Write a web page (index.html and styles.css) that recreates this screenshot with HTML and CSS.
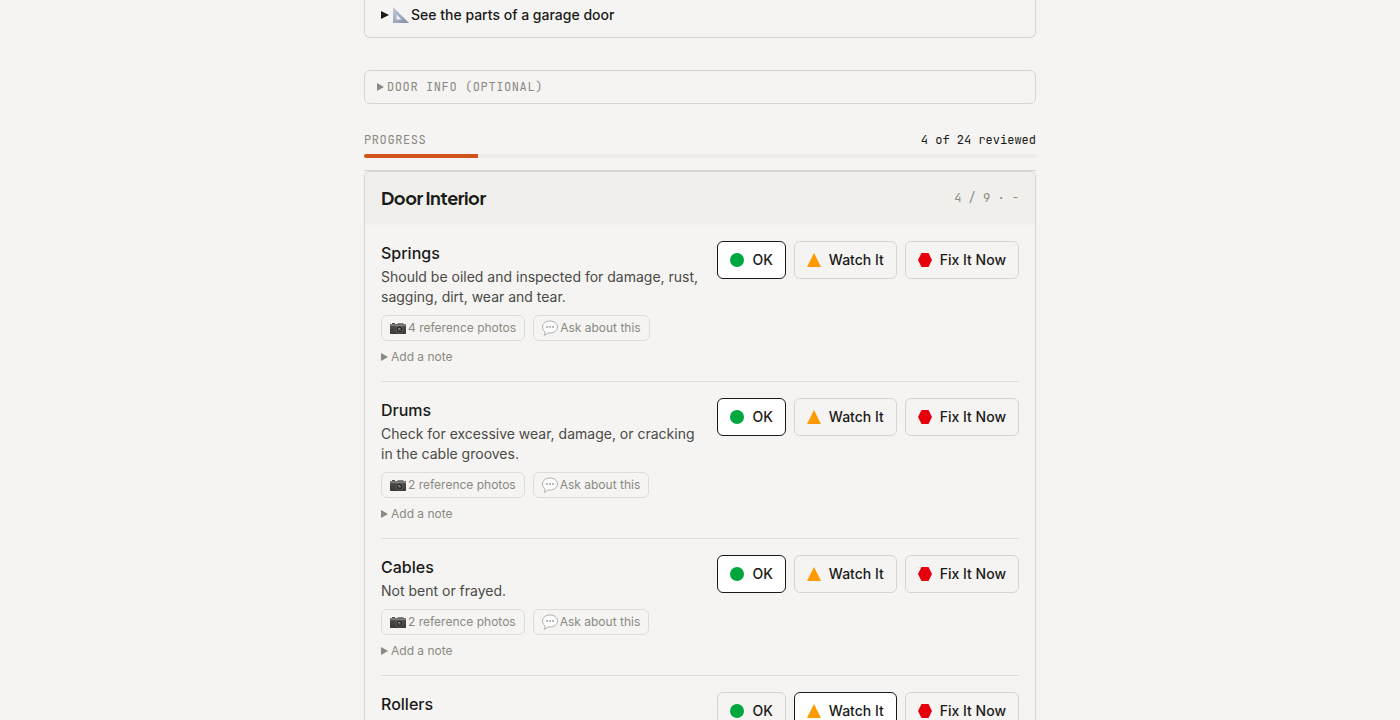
FILE: index.html
```html
<!DOCTYPE html>
<html lang="en">
<head>
  <meta charset="UTF-8">
  <title>Garage Door Inspection</title>
  <meta name="viewport" content="width=device-width, initial-scale=1.0">
  <link rel="stylesheet" href="styles.css">
</head>
<body>
  <!-- shared icons -->
  <svg class="sprite" aria-hidden="true">
    <defs>
      <linearGradient id="steel" x1="0" y1="0" x2="1" y2="1">
        <stop offset="0" stop-color="#c3cddc"/>
        <stop offset="1" stop-color="#7f8aa6"/>
      </linearGradient>
      <linearGradient id="body" x1="0" y1="0" x2="0" y2="1">
        <stop offset="0" stop-color="#8a8784"/>
        <stop offset="0.35" stop-color="#4a4846"/>
        <stop offset="1" stop-color="#3a3938"/>
      </linearGradient>
    </defs>
    <symbol id="ok" viewBox="0 0 14 14"><circle cx="7" cy="7" r="7" fill="#00a63e"/></symbol>
    <symbol id="watch" viewBox="0 0 14 14"><path d="M7 0L14 14H0z" fill="#fe9a00"/></symbol>
    <symbol id="fix" viewBox="0 0 14 14"><path d="M3.500 0h7L14 7l-3.500 7h-7L0 7z" fill="#e7000b"/></symbol>
    <symbol id="ruler" viewBox="0 0 16 16">
      <path fill="url(#steel)" fill-rule="evenodd" d="M0 0L16 16H0zM3.500 7.500V12.500H8.500z"/>
    </symbol>
    <symbol id="camera" viewBox="0 0 16 16">
      <path d="M2 3h3v1H2z" fill="#55524f"/>
      <path d="M1 4h6l1-1h5l1 1h1c.6 0 1 .4 1 1v8c0 .6-.4 1-1 1H1c-.6 0-1-.4-1-1V5c0-.6.4-1 1-1z" fill="url(#body)"/>
      <path d="M.5 5.500h15" stroke="#8b8783" stroke-width="0.8"/>
      <circle cx="9.500" cy="9.500" r="3.500" fill="#22211f" stroke="#8a8784" stroke-width="0.6"/>
      <circle cx="9.500" cy="9.500" r="2" fill="#4c5057"/>
      <circle cx="9" cy="8.800" r="0.8" fill="#a4abb5"/>
    </symbol>
    <symbol id="speech" viewBox="0 0 16 16">
      <path d="M8 1c4.200 0 7.500 2.600 7.500 6S12.200 13 8 13c-.8 0-1.500 0-2.200-.2C4.900 14.200 3.500 15 2 15.200c.8-.9 1-2 .8-3.400C1.400 10.600.5 9 .5 7 .5 3.600 3.800 1 8 1z" fill="#fbfbfb" stroke="#a6a6a6" stroke-width="0.9"/>
      <g fill="#666"><circle cx="5" cy="7" r="0.8"/><circle cx="8" cy="7" r="0.8"/><circle cx="11" cy="7" r="0.8"/></g>
    </symbol>
  </svg>

  <main class="page">
    <section class="parts">
      <details>
        <summary><svg class="emoji"><use href="#ruler"/></svg>See the parts of a garage door</summary>
      </details>
    </section>

    <details class="door-info">
      <summary>Door info (optional)</summary>
    </details>

    <div class="progress">
      <div class="progress-row">
        <span class="progress-label" id="progress-label">Progress</span>
        <span>4 of 24 reviewed</span>
      </div>
      <div class="track" role="progressbar" aria-labelledby="progress-label" aria-valuemin="0" aria-valuemax="24" aria-valuenow="4">
        <div class="fill" style="width: 17%"></div>
      </div>
    </div>

    <section class="group">
      <header class="group-header">
        <h2>Door Interior</h2>
        <span class="count">4 / 9 · -</span>
      </header>

      <article class="item">
        <div class="info">
          <h3>Springs</h3>
          <p>Should be oiled and inspected for damage, rust, sagging, dirt, wear and tear.</p>
          <div class="chips">
            <button class="chip"><svg class="emoji"><use href="#camera"/></svg>4 reference photos</button>
            <button class="chip"><svg class="emoji"><use href="#speech"/></svg>Ask about this</button>
          </div>
          <details class="note"><summary>Add a note</summary></details>
        </div>
        <div class="ratings">
          <button class="rating selected" aria-pressed="true"><svg><use href="#ok"/></svg>OK</button>
          <button class="rating" aria-pressed="false"><svg><use href="#watch"/></svg>Watch It</button>
          <button class="rating" aria-pressed="false"><svg><use href="#fix"/></svg>Fix It Now</button>
        </div>
      </article>

      <article class="item">
        <div class="info">
          <h3>Drums</h3>
          <p>Check for excessive wear, damage, or cracking in the cable grooves.</p>
          <div class="chips">
            <button class="chip"><svg class="emoji"><use href="#camera"/></svg>2 reference photos</button>
            <button class="chip"><svg class="emoji"><use href="#speech"/></svg>Ask about this</button>
          </div>
          <details class="note"><summary>Add a note</summary></details>
        </div>
        <div class="ratings">
          <button class="rating selected" aria-pressed="true"><svg><use href="#ok"/></svg>OK</button>
          <button class="rating" aria-pressed="false"><svg><use href="#watch"/></svg>Watch It</button>
          <button class="rating" aria-pressed="false"><svg><use href="#fix"/></svg>Fix It Now</button>
        </div>
      </article>

      <article class="item">
        <div class="info">
          <h3>Cables</h3>
          <p>Not bent or frayed.</p>
          <div class="chips">
            <button class="chip"><svg class="emoji"><use href="#camera"/></svg>2 reference photos</button>
            <button class="chip"><svg class="emoji"><use href="#speech"/></svg>Ask about this</button>
          </div>
          <details class="note"><summary>Add a note</summary></details>
        </div>
        <div class="ratings">
          <button class="rating selected" aria-pressed="true"><svg><use href="#ok"/></svg>OK</button>
          <button class="rating" aria-pressed="false"><svg><use href="#watch"/></svg>Watch It</button>
          <button class="rating" aria-pressed="false"><svg><use href="#fix"/></svg>Fix It Now</button>
        </div>
      </article>

      <article class="item">
        <div class="info">
          <h3>Rollers</h3>
        </div>
        <div class="ratings">
          <button class="rating" aria-pressed="false"><svg><use href="#ok"/></svg>OK</button>
          <button class="rating selected" aria-pressed="true"><svg><use href="#watch"/></svg>Watch It</button>
          <button class="rating" aria-pressed="false"><svg><use href="#fix"/></svg>Fix It Now</button>
        </div>
      </article>
    </section>
  </main>
</body>
</html>
```
FILE: styles.css
```css
* {
  box-sizing: border-box;
}

body {
  margin: 0;
  background: #f5f4f2;
  color: #1a1a18;
  font-family: Inter, "Liberation Sans", sans-serif;
  font-size: 14px;
  line-height: 20px;
}

h2,
h3,
p {
  margin: 0;
}

button {
  font: inherit;
  color: inherit;
  background: transparent;
  cursor: pointer;
}

summary {
  display: flex;
  align-items: center;
  cursor: pointer;
  list-style: none;
}

/* disclosure arrow */
summary::before {
  content: "";
  width: 7px;
  height: 8px;
  margin-right: 3px;
  background: currentColor;
  clip-path: polygon(0 0, 100% 50%, 0 100%);
}

details[open] > summary::before {
  transform: rotate(90deg);
}

.sprite {
  display: block;
  width: 0;
  height: 0;
}

.emoji {
  width: 16px;
  height: 16px;
  flex: none;
}

.page {
  max-width: 672px;
  margin: 0 auto;
}

.parts {
  padding: 5px 16px 12px;
  border: 1px solid #d6d5d1;
  border-top: none;
  border-radius: 0 0 6px 6px;
  font-weight: 500;
}

.parts summary::before {
  width: 8px;
  margin-right: 4px;
}

.parts .emoji {
  margin-right: 2px;
}

.door-info {
  margin-top: 32px;
  padding: 8px 12px;
  border: 1px solid #d6d5d1;
  border-radius: 6px;
  color: #8a8a82;
  font-family: "JetBrains Mono", "Liberation Mono", monospace;
  font-size: 12px;
  line-height: 16px;
  letter-spacing: 0.05em;
  text-transform: uppercase;
}

.progress {
  margin-top: 24px;
  padding: 4px 0 12px;
  border-bottom: 1px solid #d6d5d1;
  font-family: "JetBrains Mono", "Liberation Mono", monospace;
  font-size: 12px;
  line-height: 16px;
}

.progress-row {
  display: flex;
  justify-content: space-between;
  margin-bottom: 6px;
}

.progress-label {
  color: #8a8a82;
  letter-spacing: 0.05em;
  text-transform: uppercase;
}

.track {
  height: 4px;
  background: #edece8;
  border-radius: 2px;
  overflow: hidden;
}

.fill {
  height: 100%;
  background: #d0541b;
}

.group {
  border: 1px solid #d6d5d1;
  border-radius: 6px;
  overflow: hidden;
}

.group-header {
  display: flex;
  justify-content: space-between;
  align-items: center;
  padding: 12px 16px;
  background: #f0efeb;
  border-bottom: 1px solid #f2f1ee;
}

.group-header h2 {
  font-family: "Plus Jakarta Sans", Inter, sans-serif;
  font-size: 18px;
  font-weight: 700;
  line-height: 28px;
  letter-spacing: -0.025em;
}

.count {
  color: #8a8a82;
  font-family: "JetBrains Mono", "Liberation Mono", monospace;
  font-size: 12px;
}

.item {
  display: flex;
  justify-content: space-between;
  align-items: flex-start;
  gap: 16px;
  margin: 0 16px;
  padding: 16px 0;
  border-bottom: 1px solid #dddcd8;
}

.item:last-child {
  border-bottom: none;
}

.info {
  flex: 1;
}

.info h3 {
  font-size: 16px;
  font-weight: 500;
  line-height: 24px;
}

.info p {
  margin-top: 2px;
  color: #4a4a46;
}

.chips {
  display: flex;
  gap: 8px;
  margin-top: 8px;
}

.chip {
  display: flex;
  align-items: center;
  gap: 2px;
  padding: 4px 8px;
  border: 1px solid #dddcd8;
  border-radius: 6px;
  color: #8a8a82;
  font-size: 12px;
  line-height: 16px;
}

.note {
  margin-top: 8px;
  color: #8a8a82;
  font-size: 12px;
  line-height: 16px;
}

.ratings {
  display: flex;
  gap: 8px;
}

.rating {
  display: flex;
  align-items: center;
  gap: 8px;
  padding: 8px 12px;
  border: 1px solid #d6d5d1;
  border-radius: 6px;
  font-weight: 500;
}

.rating svg {
  width: 14px;
  height: 14px;
}

.rating.selected {
  background: #fff;
  border-color: #1a1a18;
}
```
